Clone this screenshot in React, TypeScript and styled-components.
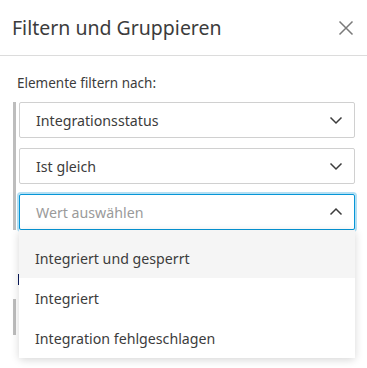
import styled, { createGlobalStyle } from 'styled-components'

const GlobalStyle = createGlobalStyle`
  html, body {
    margin: 0;
    padding: 0;
    background: #fff;
    font-family: "Noto Sans", "Liberation Sans", sans-serif;
    color: #3c3c3c;
  }
`

const Panel = styled.div`
  width: 367px;
  height: 368px;
  overflow: hidden;
  position: relative;
  background: #fff;
`

const Header = styled.header`
  display: flex;
  align-items: center;
  justify-content: space-between;
  height: 56px;
  padding: 0 12px 0 12px;
  border-bottom: 1px solid #dcdcdc;
  box-sizing: border-box;
`

const Title = styled.h1`
  margin: 0 0 1px;
  font-size: 19.5px;
  font-weight: 400;
  color: #3c3c3c;
`

const CloseButton = styled.button`
  border: 0;
  background: none;
  padding: 0;
  width: 18px;
  height: 18px;
  display: flex;
  align-items: center;
  justify-content: center;
  cursor: pointer;
`

const Body = styled.div`
  padding: 17px 12px 0 13px;
`

const Label = styled.div`
  font-size: 13.5px;
  padding-left: 4px;
  height: 29px;
  line-height: 20px;
`

const Marker = styled.div`
  margin: 0 0 14px 5px;
  width: 2px;
  height: 11px;
  background: #0a1a5c;
`

const Group = styled.div`
  display: flex;
  flex-direction: column;
  gap: 10px;
  border-left: 3px solid #bdbdbd;
  padding-left: 3px;
  margin-bottom: 44px;
`

const SelectWrap = styled.div`
  position: relative;
`

const Select = styled.div<{ $open?: boolean }>`
  display: flex;
  align-items: center;
  justify-content: space-between;
  height: 36px;
  box-sizing: border-box;
  padding: 0 11px 0 16px;
  border: 1px solid ${p => (p.$open ? '#0696d7' : '#d0d0d0')};
  border-radius: 2px;
  box-shadow: ${p => (p.$open ? '0 0 0 2px rgba(6, 150, 215, 0.3)' : 'none')};
  font-size: 14.2px;
`

const Value = styled.span<{ $placeholder?: boolean }>`
  color: ${p => (p.$placeholder ? '#9a9a9a' : '#3c3c3c')};
`

const Menu = styled.ul`
  position: absolute;
  top: 36px;
  left: 0;
  right: 0;
  margin: 0;
  padding: 0;
  list-style: none;
  background: #fff;
  border-radius: 0 0 4px 4px;
  box-shadow: 0 2px 8px rgba(0, 0, 0, 0.16);
  z-index: 2;
`

const Option = styled.li<{ $active?: boolean }>`
  display: flex;
  align-items: center;
  height: 40px;
  padding: 0 16px;
  font-size: 14.2px;
  color: #3c3c3c;
  background: ${p => (p.$active ? '#f5f5f5' : '#fff')};

  &:first-child {
    height: 48px;
    padding-top: 8px;
    box-sizing: border-box;
  }
`

function Chevron({ up }: { up?: boolean }) {
  return (
    <svg width="14" height="14" viewBox="0 0 14 14">
      <path
        d={up ? 'M1.5 9.5 L7 4 L12.5 9.5' : 'M1.5 4.5 L7 10 L12.5 4.5'}
        fill="none"
        stroke="#3c3c3c"
        strokeWidth="1.5"
      />
    </svg>
  )
}

export default function App() {
  return (
    <>
      <GlobalStyle />
      <Panel>
        <Header>
          <Title>Filtern und Gruppieren</Title>
          <CloseButton aria-label="Schließen">
            <svg width="16" height="16" viewBox="0 0 16 16">
              <path d="M1.5 1.5 L14.5 14.5 M14.5 1.5 L1.5 14.5" stroke="#7a7a7a" strokeWidth="1.5" />
            </svg>
          </CloseButton>
        </Header>
        <Body>
          <Label>Elemente filtern nach:</Label>
          <Group>
            <Select>
              <Value>Integrationsstatus</Value>
              <Chevron />
            </Select>
            <Select>
              <Value>Ist gleich</Value>
              <Chevron />
            </Select>
            <SelectWrap>
              <Select $open>
                <Value $placeholder>Wert auswählen</Value>
                <Chevron up />
              </Select>
              <Menu>
                <Option $active>Integriert und gesperrt</Option>
                <Option>Integriert</Option>
                <Option>Integration fehlgeschlagen</Option>
              </Menu>
            </SelectWrap>
          </Group>
          <Marker />
          <Group>
            <Select>
              <Chevron />
            </Select>
          </Group>
        </Body>
      </Panel>
    </>
  )
}
